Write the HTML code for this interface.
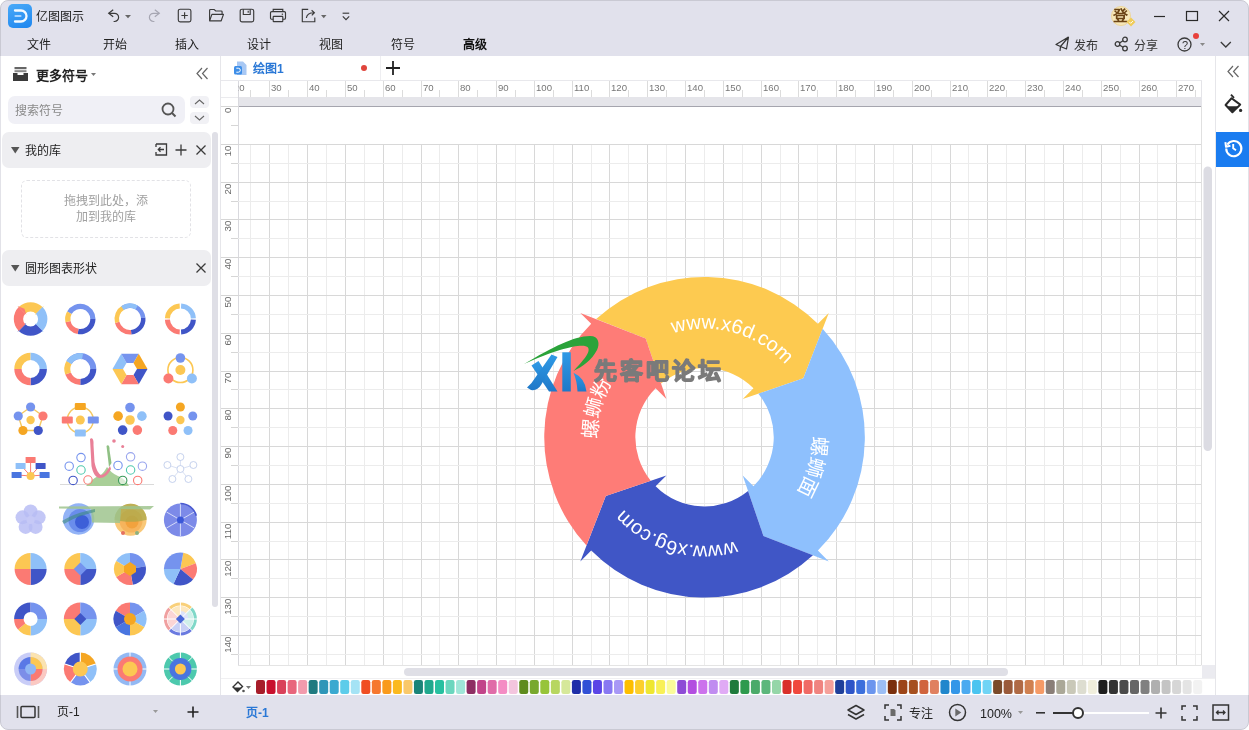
<!DOCTYPE html>
<html lang="zh-CN">
<head>
<meta charset="utf-8">
<style>
*{box-sizing:border-box;margin:0;padding:0}
html,body{width:1249px;height:730px;overflow:hidden;background:#fff;font-family:"Liberation Sans",sans-serif;color:#333}
body{will-change:transform}
.a{position:absolute}
.t{position:absolute;font-size:12px;line-height:14px;white-space:nowrap}
svg{position:absolute;display:block;overflow:visible}
</style>
</head>
<body>

<div class="a" style="left:0;top:0;width:1249px;height:730px;border:1px solid #c9c9d3;border-radius:8px;background:#e1e1ec;overflow:hidden">
</div>
<div class="a" style="left:8px;top:4px;width:24px;height:24px;border-radius:5px;background:linear-gradient(160deg,#4aaaf8,#1e86ef)"></div>
<svg style="left:8px;top:4px" width="24" height="24"><path d="M7 6.5h6a5.5 5.5 0 0 1 0 11H7" fill="none" stroke="#f4faff" stroke-width="2.3" stroke-linecap="round"/><path d="M7.5 12h5" stroke="#a8d4ff" stroke-width="2.2" stroke-linecap="round"/></svg>
<div class="t" style="left:36px;top:10px;color:#222;font-size:12px">亿图图示</div>
<svg style="left:106px;top:8px" width="14" height="16"><path d="M7.2 1.8L2.7 5.3l4.5 3.5" fill="none" stroke="#3a3a3a" stroke-width="1.2"/><path d="M2.9 5.3H8.5a4.1 4.1 0 0 1 0 8.2H7.6" fill="none" stroke="#3a3a3a" stroke-width="1.2"/></svg>
<svg style="left:125px;top:15px" width="7" height="4"><path d="M0 0h6l-3 3.2z" fill="#666"/></svg>
<svg style="left:146px;top:8px" width="15" height="16"><path d="M8.8 1.8l4.5 3.5-4.5 3.5" fill="none" stroke="#a6a6b2" stroke-width="1.2"/><path d="M13.1 5.3H7.5a4.1 4.1 0 0 0 0 8.2h0.9" fill="none" stroke="#a6a6b2" stroke-width="1.2"/></svg>
<svg style="left:177px;top:8px" width="15" height="15"><rect x="1.3" y="1.2" width="12.6" height="12.6" rx="1.8" fill="none" stroke="#3a3a3a" stroke-width="1.15"/><path d="M7.6 4.3v6.4M4.4 7.5h6.4" fill="none" stroke="#3a3a3a" stroke-width="1.15"/></svg>
<svg style="left:208px;top:8px" width="17" height="15"><path d="M1.6 12.6V2.4a0.9 0.9 0 0 1 0.9-0.9h3.7l1.5 1.5h5.5a0.9 0.9 0 0 1 0.9 0.9v2.3" fill="none" stroke="#3a3a3a" stroke-width="1.15"/><path d="M1.6 12.8L3.9 6.4h11.6l-2.3 6.4z" fill="none" stroke="#3a3a3a" stroke-width="1.15" stroke-linejoin="round"/></svg>
<svg style="left:239px;top:8px" width="16" height="15"><rect x="1.2" y="1.2" width="13.5" height="12.6" rx="1.8" fill="none" stroke="#3a3a3a" stroke-width="1.15"/><path d="M4.3 1.2v5.3h6.9V1.2M9.2 2.8v2" fill="none" stroke="#3a3a3a" stroke-width="1.15"/></svg>
<svg style="left:269px;top:8px" width="18" height="15"><path d="M4.2 3.6V1.3h9.6v2.3" fill="none" stroke="#3a3a3a" stroke-width="1.15"/><path d="M4.2 11.2H2.8a1.3 1.3 0 0 1-1.3-1.3V4.9a1.3 1.3 0 0 1 1.3-1.3h12.4a1.3 1.3 0 0 1 1.3 1.3v5a1.3 1.3 0 0 1-1.3 1.3h-1.4" fill="none" stroke="#3a3a3a" stroke-width="1.15"/><rect x="4.2" y="8.4" width="9.6" height="5.2" rx="0.6" fill="none" stroke="#3a3a3a" stroke-width="1.15"/><path d="M13.4 5.6v1.2" stroke="#3a3a3a" stroke-width="1.3"/></svg>
<svg style="left:301px;top:8px" width="16" height="15"><path d="M7.2 1.3H1.3v12.4h12.5V9.4" fill="none" stroke="#3a3a3a" stroke-width="1.15"/><path d="M5.4 10c0.3-3.2 2.6-5.3 7.6-5.3M10.6 2.3l2.8 2.4-2.6 2.6" fill="none" stroke="#3a3a3a" stroke-width="1.15"/></svg>
<svg style="left:321px;top:15px" width="7" height="4"><path d="M0 0h5.5l-2.75 3.2z" fill="#666"/></svg>
<svg style="left:342px;top:12px" width="8" height="10"><path d="M0.6 1.2h6.6" fill="none" stroke="#3a3a3a" stroke-width="1.15"/><path d="M0.8 4.3l3.2 3.3 3.2-3.3" fill="none" stroke="#3a3a3a" stroke-width="1.15"/></svg>
<div class="a" style="left:1111px;top:6px;width:20px;height:20px;border-radius:50%;background:#f7e7b8;border:1px solid #eed69a"></div>
<div class="t" style="left:1113px;top:8px;font-size:15px;line-height:16px;color:#6b4315;font-weight:bold">登</div>
<svg style="left:1126px;top:17px" width="10" height="10"><path d="M5 0.5L9.5 5 5 9.5 0.5 5z" fill="#f0cc5a"/><path d="M3.2 4.8l1.5 1.5 2.3-2.3" fill="none" stroke="#fff" stroke-width="0.9"/></svg>
<svg style="left:1154px;top:10px" width="12" height="12"><path d="M0 6.5h11" fill="none" stroke="#2a2a2a" stroke-width="1.2"/></svg>
<svg style="left:1185px;top:10px" width="13" height="12"><rect x="1.5" y="1.5" width="11" height="9" fill="none" stroke="#2a2a2a" stroke-width="1.2"/></svg>
<svg style="left:1218px;top:10px" width="12" height="12"><path d="M1 1l10 10M11 1L1 11" fill="none" stroke="#2a2a2a" stroke-width="1.2"/></svg>
<div class="t" style="left:27px;top:38px;color:#222;font-weight:normal">文件</div>
<div class="t" style="left:103px;top:38px;color:#222;font-weight:normal">开始</div>
<div class="t" style="left:175px;top:38px;color:#222;font-weight:normal">插入</div>
<div class="t" style="left:247px;top:38px;color:#222;font-weight:normal">设计</div>
<div class="t" style="left:319px;top:38px;color:#222;font-weight:normal">视图</div>
<div class="t" style="left:391px;top:38px;color:#222;font-weight:normal">符号</div>
<div class="t" style="left:463px;top:38px;color:#111;font-weight:bold">高级</div>
<svg style="left:1055px;top:36px" width="16" height="17"><path d="M13.5 1L1 8.5l4.5 2L5 15M13.5 1l-2 12-6-2.5M13.5 1l-8 9.5" fill="none" stroke="#333" stroke-width="1.2" stroke-linejoin="round"/></svg>
<div class="t" style="left:1074px;top:39px;color:#333">发布</div>
<svg style="left:1114px;top:36px" width="15" height="16"><circle cx="3.5" cy="8" r="2.3" fill="none" stroke="#3a3a3a" stroke-width="1.3"/><circle cx="11" cy="3.5" r="2.3" fill="none" stroke="#3a3a3a" stroke-width="1.3"/><circle cx="11" cy="12.5" r="2.3" fill="none" stroke="#3a3a3a" stroke-width="1.3"/><path d="M5.5 7l3.5-2.3M5.5 9l3.5 2.3" fill="none" stroke="#3a3a3a" stroke-width="1.3"/></svg>
<div class="t" style="left:1134px;top:39px;color:#333">分享</div>
<svg style="left:1177px;top:37px" width="16" height="16"><circle cx="7.5" cy="7.5" r="6.5" fill="none" stroke="#3a3a3a" stroke-width="1.3"/></svg>
<div class="t" style="left:1182px;top:38px;font-size:11px;color:#333">?</div>
<div class="a" style="left:1193px;top:33px;width:6px;height:6px;border-radius:50%;background:#e8413c"></div>
<svg style="left:1200px;top:43px" width="6" height="4"><path d="M0 0h5l-2.5 3z" fill="#888"/></svg>
<svg style="left:1220px;top:41px" width="12" height="7"><path d="M0.8 1l5 5 5-5" fill="none" stroke="#3a3a3a" stroke-width="1.3"/></svg>
<div class="a" style="left:1px;top:56px;width:219px;height:639px;background:#fff"></div>
<div class="a" style="left:220px;top:56px;width:1px;height:639px;background:#e6e6ea"></div>
<div class="a" style="left:221px;top:56px;width:994px;height:639px;background:#fff"></div>
<div class="a" style="left:1215px;top:56px;width:1px;height:639px;background:#e6e6ea"></div>
<div class="a" style="left:1216px;top:56px;width:32px;height:639px;background:#fff"></div>
<div class="a" style="left:0;top:56px;width:1px;height:639px;background:#e2e2e8"></div>
<div class="a" style="left:1248px;top:56px;width:1px;height:639px;background:#e2e2e8"></div>
<svg style="left:13px;top:67px" width="15" height="14"><rect x="1.5" y="0" width="12" height="2.2" fill="#666"/><rect x="1.5" y="3.2" width="12" height="2" fill="#888"/><path d="M0 6h4.5v2h6V6H15v8H0z" fill="#3a3a3a"/></svg>
<div class="t" style="left:36px;top:68px;font-size:13px;line-height:15px;font-weight:bold;color:#222">更多符号</div>
<svg style="left:91px;top:73px" width="6" height="4"><path d="M0 0h5l-2.5 3z" fill="#777"/></svg>
<svg style="left:195px;top:67px" width="14" height="13"><path d="M7 1L2 6.5 7 12M12.5 1l-5 5.5 5 5.5" fill="none" stroke="#666" stroke-width="1.2"/></svg>
<div class="a" style="left:8px;top:96px;width:177px;height:28px;border-radius:7px;background:#f0f0f6"></div>
<div class="t" style="left:15px;top:104px;color:#8a8a8a;font-size:12px">搜索符号</div>
<svg style="left:161px;top:102px" width="17" height="17"><circle cx="7" cy="7" r="5.5" fill="none" stroke="#555" stroke-width="1.8"/><path d="M11 11l3.5 3.5" stroke="#555" stroke-width="2"/></svg>
<div class="a" style="left:190px;top:96px;width:19px;height:12px;border-radius:4px;background:#f1f1f5"></div>
<div class="a" style="left:190px;top:112px;width:19px;height:12px;border-radius:4px;background:#f1f1f5"></div>
<svg style="left:193px;top:98px" width="13" height="8"><path d="M2 6l4.5-4 4.5 4" fill="none" stroke="#666" stroke-width="1.1"/></svg>
<svg style="left:193px;top:114px" width="13" height="8"><path d="M2 2l4.5 4 4.5-4" fill="none" stroke="#666" stroke-width="1.1"/></svg>
<div class="a" style="left:2px;top:132px;width:209px;height:36px;border-radius:7px;background:#eeeef1"></div>
<svg style="left:11px;top:147px" width="9" height="7"><path d="M0 0h8.5L4.25 6.5z" fill="#555"/></svg>
<div class="t" style="left:25px;top:144px;color:#222">我的库</div>
<svg style="left:155px;top:143px" width="13" height="13"><path d="M1 1h10.5v11H1v-3M1 4V1" fill="none" stroke="#3a3a3a" stroke-width="1.3"/><path d="M9 6.5H3.5M5.5 4.3L3.3 6.5l2.2 2.2" fill="none" stroke="#3a3a3a" stroke-width="1.3"/></svg>
<svg style="left:175px;top:144px" width="12" height="12"><path d="M6 0.5v11M0.5 6h11" fill="none" stroke="#3a3a3a" stroke-width="1.3"/></svg>
<svg style="left:196px;top:145px" width="10" height="10"><path d="M0.5 0.5l9 9M9.5 0.5l-9 9" fill="none" stroke="#3a3a3a" stroke-width="1.3"/></svg>
<div class="a" style="left:21px;top:180px;width:170px;height:58px;border:1px dashed #e2e2e6;border-radius:6px"></div>
<div class="t" style="left:21px;top:193px;width:170px;text-align:center;color:#a0a0a0;line-height:16px">拖拽到此处，添<br>加到我的库</div>
<div class="a" style="left:2px;top:250px;width:209px;height:36px;border-radius:7px;background:#eeeef1"></div>
<svg style="left:11px;top:265px" width="9" height="7"><path d="M0 0h8.5L4.25 6.5z" fill="#555"/></svg>
<div class="t" style="left:25px;top:262px;color:#222">圆形图表形状</div>
<svg style="left:196px;top:263px" width="10" height="10"><path d="M0.5 0.5l9 9M9.5 0.5l-9 9" fill="none" stroke="#3a3a3a" stroke-width="1.3"/></svg>
<div class="a" style="left:212px;top:132px;width:6px;height:475px;border-radius:3px;background:#dfdfe6"></div>
<svg style="left:0;top:0" width="1249" height="730"><defs><filter id="tb" x="-5%" y="-5%" width="110%" height="110%"><feGaussianBlur stdDeviation="0.35"/></filter></defs><g filter="url(#tb)">
<path d="M18.72 307.12A16.8 16.8 0 0 1 42.48 307.12L35.90 313.70A7.5 7.5 0 0 0 25.30 313.70Z" fill="#fcc752" />
<path d="M43.68 305.92L40.89 312.82L34.84 314.76Z" fill="#fcc752"/>
<path d="M42.48 307.12A16.8 16.8 0 0 1 42.48 330.88L35.90 324.30A7.5 7.5 0 0 0 35.90 313.70Z" fill="#8fc0f8" />
<path d="M43.68 332.08L36.78 329.29L34.84 323.24Z" fill="#8fc0f8"/>
<path d="M42.48 330.88A16.8 16.8 0 0 1 18.72 330.88L25.30 324.30A7.5 7.5 0 0 0 35.90 324.30Z" fill="#3f55c7" />
<path d="M17.52 332.08L20.31 325.18L26.36 323.24Z" fill="#3f55c7"/>
<path d="M18.72 330.88A16.8 16.8 0 0 1 18.72 307.12L25.30 313.70A7.5 7.5 0 0 0 25.30 324.30Z" fill="#fb7a73" />
<path d="M17.52 305.92L24.42 308.71L26.36 314.76Z" fill="#fb7a73"/>
<path d="M67.14 311.40A15.2 15.2 0 0 1 95.50 319.00L90.30 319.00A10 10 0 0 0 71.64 314.00Z" fill="#7593ee" />
<path d="M95.50 319.00A15.2 15.2 0 0 1 77.66 333.97L78.56 328.85A10 10 0 0 0 90.30 319.00Z" fill="#3f55c7" />
<path d="M77.66 333.97A15.2 15.2 0 0 1 65.43 322.16L70.52 321.08A10 10 0 0 0 78.56 328.85Z" fill="#fb7a73" />
<path d="M65.43 322.16A15.2 15.2 0 0 1 67.14 311.40L71.64 314.00A10 10 0 0 0 70.52 321.08Z" fill="#fcc752" />
<path d="M122.25 305.58A15.5 15.5 0 0 1 145.44 317.65L140.96 318.04A11 11 0 0 0 124.50 309.47Z" fill="#7593ee" />
<path d="M145.44 317.65A15.5 15.5 0 0 1 131.35 334.44L130.96 329.96A11 11 0 0 0 140.96 318.04Z" fill="#3f55c7" />
<path d="M131.35 334.44A15.5 15.5 0 0 1 115.03 323.01L119.37 321.85A11 11 0 0 0 130.96 329.96Z" fill="#fb7a73" />
<path d="M115.03 323.01A15.5 15.5 0 0 1 122.25 305.58L124.50 309.47A11 11 0 0 0 119.37 321.85Z" fill="#fcc752" />
<path d="M121.11 306.30A15.5 15.5 0 0 1 137.75 305.58L135.50 309.47A11 11 0 0 0 123.69 309.99Z" fill="#8fc0f8" />
<path d="M164.92 318.19A15.5 15.5 0 0 1 179.59 303.52L179.85 308.51A10.5 10.5 0 0 0 169.91 318.45Z" fill="#fcc752" />
<path d="M181.21 303.52A15.5 15.5 0 0 1 195.88 318.19L190.89 318.45A10.5 10.5 0 0 0 180.95 308.51Z" fill="#8fc0f8" />
<path d="M195.88 319.81A15.5 15.5 0 0 1 181.21 334.48L180.95 329.49A10.5 10.5 0 0 0 190.89 319.55Z" fill="#3f55c7" />
<path d="M179.59 334.48A15.5 15.5 0 0 1 164.92 319.81L169.91 319.55A10.5 10.5 0 0 0 179.85 329.49Z" fill="#fb7a73" />
<path d="M14.30 369.00A16.3 16.3 0 0 1 30.60 352.70L30.60 360.00A9 9 0 0 0 21.60 369.00Z" fill="#fcc752" />
<path d="M30.60 352.70A16.3 16.3 0 0 1 46.90 369.00L39.60 369.00A9 9 0 0 0 30.60 360.00Z" fill="#8fc0f8" />
<path d="M46.90 369.00A16.3 16.3 0 0 1 30.60 385.30L30.60 378.00A9 9 0 0 0 39.60 369.00Z" fill="#3f55c7" />
<path d="M30.60 385.30A16.3 16.3 0 0 1 14.30 369.00L21.60 369.00A9 9 0 0 0 30.60 378.00Z" fill="#fb7a73" />
<path d="M66.44 361.00A16 16 0 0 1 96.30 369.00L90.30 369.00A10 10 0 0 0 71.64 364.00Z" fill="#7593ee" />
<path d="M96.30 369.00A16 16 0 0 1 80.30 385.00L80.30 379.00A10 10 0 0 0 90.30 369.00Z" fill="#3f55c7" />
<path d="M80.30 385.00A16 16 0 0 1 65.26 374.47L70.90 372.42A10 10 0 0 0 80.30 379.00Z" fill="#fb7a73" />
<path d="M65.26 374.47A16 16 0 0 1 66.44 361.00L71.64 364.00A10 10 0 0 0 70.90 372.42Z" fill="#fcc752" />
<path d="M66.44 361.00A16 16 0 0 1 83.08 353.24L82.04 359.15A10 10 0 0 0 71.64 364.00Z" fill="#8fc0f8" />
<path d="M112.50 369.00L121.25 353.84L126.50 362.94L123.00 369.00Z" fill="#8fc0f8"/>
<path d="M121.25 353.84L138.75 353.84L133.50 362.94L126.50 362.94Z" fill="#7593ee"/>
<path d="M138.75 353.84L147.50 369.00L137.00 369.00L133.50 362.94Z" fill="#f5a623"/>
<path d="M147.50 369.00L138.75 384.16L133.50 375.06L137.00 369.00Z" fill="#3f55c7"/>
<path d="M138.75 384.16L121.25 384.16L126.50 375.06L133.50 375.06Z" fill="#fb7a73"/>
<path d="M121.25 384.16L112.50 369.00L123.00 369.00L126.50 375.06Z" fill="#fcc752"/>
<circle cx="180.4" cy="370" r="12.5" fill="none" stroke="#fcc752" stroke-width="1.6"/>
<circle cx="180.4" cy="370" r="5" fill="#fcc752" />
<circle cx="180.4" cy="358" r="4.8" fill="#7593ee" />
<circle cx="168.4" cy="378.5" r="5" fill="#fb7a73" />
<circle cx="191.9" cy="378.5" r="5" fill="#8fc0f8" />
<path d="M30.60 407.00L42.96 415.98L38.24 430.52L22.96 430.52L18.24 415.98Z" fill="none" stroke="#f5c860" stroke-width="1.4"/>
<circle cx="30.6" cy="407.0" r="4.6" fill="#7593ee" />
<circle cx="42.96" cy="415.98" r="4.6" fill="#fb7a73" />
<circle cx="38.24" cy="430.52" r="4.6" fill="#3f55c7" />
<circle cx="22.96" cy="430.52" r="4.6" fill="#f5a623" />
<circle cx="18.24" cy="415.98" r="4.6" fill="#7593ee" />
<circle cx="30.6" cy="420" r="4.2" fill="#fcc752" />
<circle cx="80.3" cy="420" r="13" fill="none" stroke="#f5c860" stroke-width="1.4"/>
<circle cx="80.3" cy="420" r="4.5" fill="#fcc752" />
<rect x="74.80" y="402.90" width="11" height="7.2" rx="1" fill="#f5a623"/>
<rect x="61.80" y="416.40" width="11" height="7.2" rx="1" fill="#fb7a73"/>
<rect x="87.80" y="416.40" width="11" height="7.2" rx="1" fill="#7593ee"/>
<rect x="74.80" y="429.40" width="11" height="7.2" rx="1" fill="#8fc0f8"/>
<circle cx="130.0" cy="407.5" r="4.8" fill="#7593ee" />
<circle cx="141.89" cy="416.14" r="4.8" fill="#8fc0f8" />
<circle cx="137.35" cy="430.11" r="4.8" fill="#fb7a73" />
<circle cx="122.65" cy="430.11" r="4.8" fill="#3f55c7" />
<circle cx="118.11" cy="416.14" r="4.8" fill="#f5a623" />
<circle cx="130" cy="420" r="4.8" fill="#fcc752" />
<circle cx="180.4" cy="407.0" r="4.5" fill="#f5a623" />
<circle cx="192.76" cy="415.98" r="4.5" fill="#7593ee" />
<circle cx="188.04" cy="430.52" r="4.5" fill="#8fc0f8" />
<circle cx="172.76" cy="430.52" r="4.5" fill="#fb7a73" />
<circle cx="168.04" cy="415.98" r="4.5" fill="#3f55c7" />
<circle cx="180.4" cy="420" r="4.2" fill="#fcc752" />
<path d="M30.6 476L30.6 460M30.6 476L21.6 466M30.6 476L39.6 466M30.6 476L17.6 475M30.6 476L43.6 475" stroke="#fb7a73" stroke-width="1"/>
<rect x="25.60" y="457.00" width="10" height="6" rx="0.6" fill="#fb7a73"/>
<rect x="15.60" y="463.00" width="10" height="6" rx="0.6" fill="#8fc0f8"/>
<rect x="35.60" y="463.00" width="10" height="6" rx="0.6" fill="#3f55c7"/>
<rect x="11.60" y="472.00" width="10" height="6" rx="0.6" fill="#4a74e0"/>
<rect x="39.60" y="472.00" width="10" height="6" rx="0.6" fill="#4a74e0"/>
<circle cx="30.6" cy="476" r="4" fill="#fcc752" />
<path d="M60 484.5L154 484.5" stroke="#d0d0d0" stroke-width="0.8"/>
<path d="M86 486C91 481 95 477 99 476C103 474 105 470 107 467C110 471 113 474 118 476C123 478 127 482 129 486Z" fill="#a9cf98"/>
<path d="M90 439C92 437 94 439 93.5 445L94.5 462C96 470 99 474 101 475C104 475 107 471 110 466L111 469C108 475 104 478 100 478C96 478 93 474 91.5 466Z" fill="#e98097"/>
<path d="M106.5 446C108 444 110 446 109.5 450L111.5 463L109 467Z" fill="#8fc084"/>
<circle cx="114" cy="441" r="1.8" fill="#e98097" />
<circle cx="122.7" cy="446.5" r="1.5" fill="#e98097" />
<circle cx="81" cy="457.6" r="4.2" fill="#fff" fill-opacity="0.6" stroke="#7593ee" stroke-width="1.1"/>
<circle cx="69.2" cy="466.2" r="4.2" fill="#fff" fill-opacity="0.6" stroke="#7593ee" stroke-width="1.1"/>
<circle cx="81" cy="470" r="4.2" fill="#fff" fill-opacity="0.6" stroke="#4ec9ad" stroke-width="1.1"/>
<circle cx="73.1" cy="480.4" r="4.2" fill="#fff" fill-opacity="0.6" stroke="#3f55c7" stroke-width="1.1"/>
<circle cx="88" cy="480" r="4.2" fill="#fff" fill-opacity="0.6" stroke="#fb7a73" stroke-width="1.1"/>
<circle cx="118" cy="465.4" r="4.2" fill="#fff" fill-opacity="0.6" stroke="#7593ee" stroke-width="1.1"/>
<circle cx="130.6" cy="456.8" r="4.2" fill="#fff" fill-opacity="0.6" stroke="#9aa6ee" stroke-width="1.1"/>
<circle cx="142.4" cy="466.2" r="4.2" fill="#fff" fill-opacity="0.6" stroke="#9aa6ee" stroke-width="1.1"/>
<circle cx="130.6" cy="470" r="4.2" fill="#fff" fill-opacity="0.6" stroke="#4ec9ad" stroke-width="1.1"/>
<circle cx="122.7" cy="480.4" r="4.2" fill="#fff" fill-opacity="0.6" stroke="#3a9a5a" stroke-width="1.1"/>
<circle cx="137.7" cy="480.4" r="4.2" fill="#fff" fill-opacity="0.6" stroke="#fb7a73" stroke-width="1.1"/>
<path d="M180.4 469L180.4 457" stroke="#c8d4ee" stroke-width="0.7"/>
<circle cx="180.4" cy="457" r="3.5" fill="#fff" stroke="#b8c6e8" stroke-width="0.8"/>
<path d="M180.4 469L167.4 465" stroke="#c8d4ee" stroke-width="0.7"/>
<circle cx="167.4" cy="465" r="3.5" fill="#fff" stroke="#b8c6e8" stroke-width="0.8"/>
<path d="M180.4 469L193.4 465" stroke="#c8d4ee" stroke-width="0.7"/>
<circle cx="193.4" cy="465" r="3.5" fill="#fff" stroke="#b8c6e8" stroke-width="0.8"/>
<path d="M180.4 469L172.4 479" stroke="#c8d4ee" stroke-width="0.7"/>
<circle cx="172.4" cy="479" r="3.5" fill="#fff" stroke="#b8c6e8" stroke-width="0.8"/>
<path d="M180.4 469L188.4 479" stroke="#c8d4ee" stroke-width="0.7"/>
<circle cx="188.4" cy="479" r="3.5" fill="#fff" stroke="#b8c6e8" stroke-width="0.8"/>
<circle cx="180.4" cy="469" r="3.5" fill="#fff" stroke="#b8c6e8" stroke-width="0.8"/>
<circle cx="30.6" cy="511.5" r="7" fill="#b9bdf4" fill-opacity="0.85"/>
<circle cx="38.68" cy="517.37" r="7" fill="#b9bdf4" fill-opacity="0.85"/>
<circle cx="35.6" cy="526.88" r="7" fill="#b9bdf4" fill-opacity="0.85"/>
<circle cx="25.6" cy="526.88" r="7" fill="#b9bdf4" fill-opacity="0.85"/>
<circle cx="22.52" cy="517.37" r="7" fill="#b9bdf4" fill-opacity="0.85"/>
<circle cx="30.6" cy="520" r="4" fill="#c6c9f6" />
<defs><radialGradient id="sph" cx="0.6" cy="0.6" r="0.6"><stop offset="0" stop-color="#3560d8"/><stop offset="1" stop-color="#8ab4f2"/></radialGradient><radialGradient id="sph2" cx="0.5" cy="0.6" r="0.6"><stop offset="0" stop-color="#f6a24a"/><stop offset="1" stop-color="#f8d27a"/></radialGradient></defs>
<circle cx="78.6" cy="519" r="15.7" fill="#93b3f6" />
<circle cx="80" cy="520.5" r="11.5" fill="#6b8dec" />
<circle cx="82" cy="522" r="7" fill="#3d5fd8" />
<circle cx="130.6" cy="519.8" r="16" fill="#f9c878" />
<circle cx="131" cy="521" r="11.5" fill="#f6b45c" />
<circle cx="132" cy="522" r="6.5" fill="#f2a23e" />
<path d="M114.6 519.8A16 16 0 0 1 146.6 519.8C140 522 125 523 114.6 519.8Z" fill="#a9a84a" fill-opacity="0.75"/>
<path d="M59 506.5L154 506L150 509.5L121 509L120 523L92 522.5L91 509L59 508.5Z" fill="#9fc48e" fill-opacity="0.85"/>
<path d="M62 521C70 516 80 512 95 509L95 512C82 515 72 519 64 524Z" fill="#3d8a80" fill-opacity="0.6"/>
<circle cx="123" cy="533" r="2" fill="#e57060" />
<circle cx="137" cy="533" r="2" fill="#8db080" />
<circle cx="180.4" cy="520" r="16.5" fill="#7b8ae8" />
<path d="M180.4 520L180.40 504.00" stroke="#dfe3fb" stroke-width="0.9"/>
<path d="M180.4 520L194.26 512.00" stroke="#dfe3fb" stroke-width="0.9"/>
<path d="M180.4 520L194.26 528.00" stroke="#dfe3fb" stroke-width="0.9"/>
<path d="M180.4 520L180.40 536.00" stroke="#dfe3fb" stroke-width="0.9"/>
<path d="M180.4 520L166.54 528.00" stroke="#dfe3fb" stroke-width="0.9"/>
<path d="M180.4 520L166.54 512.00" stroke="#dfe3fb" stroke-width="0.9"/>
<path d="M180.4 503.5A16.5 16.5 0 0 1 196.30 515.70" fill="none" stroke="#4a5ad0" stroke-width="1.6"/>
<circle cx="180.4" cy="520" r="3.5" fill="#3a58d8" />
<path d="M30.60 569.00L14.60 569.00A16 16 0 0 1 30.60 553.00Z" fill="#fcc752" />
<path d="M30.60 569.00L30.60 553.00A16 16 0 0 1 46.60 569.00Z" fill="#8fc0f8" />
<path d="M30.60 569.00L46.60 569.00A16 16 0 0 1 30.60 585.00Z" fill="#3f55c7" />
<path d="M30.60 569.00L30.60 585.00A16 16 0 0 1 14.60 569.00Z" fill="#fb7a73" />
<path d="M80.30 569.00L64.30 569.00A16 16 0 0 1 80.30 553.00Z" fill="#fcc752" />
<path d="M80.30 569.00L80.30 553.00A16 16 0 0 1 96.30 569.00Z" fill="#8fc0f8" />
<path d="M80.30 569.00L96.30 569.00A16 16 0 0 1 80.30 585.00Z" fill="#3f55c7" />
<path d="M80.30 569.00L80.30 585.00A16 16 0 0 1 64.30 569.00Z" fill="#fb7a73" />
<path d="M80.3 562.5L86.8 569L80.3 575.5L73.8 569Z" fill="#7593ee"/>
<path d="M130.00 569.00L116.14 561.00A16 16 0 0 1 130.00 553.00Z" fill="#8fc0f8" />
<path d="M130.00 569.00L130.00 553.00A16 16 0 0 1 145.76 566.22Z" fill="#7593ee" />
<path d="M130.00 569.00L145.76 566.22A16 16 0 0 1 132.78 584.76Z" fill="#3f55c7" />
<path d="M130.00 569.00L132.78 584.76A16 16 0 0 1 116.14 577.00Z" fill="#fb7a73" />
<path d="M130.00 569.00L116.14 577.00A16 16 0 0 1 116.14 561.00Z" fill="#fcc752" />
<path d="M124 566L130 562L136 566L136 572L130 576L124 572Z" fill="#f5a623"/>
<path d="M180.40 569.00L183.27 552.75A16.5 16.5 0 0 1 195.90 563.36Z" fill="#fcc752" />
<path d="M180.40 569.00L195.90 563.36A16.5 16.5 0 0 1 193.04 579.61Z" fill="#fb7a73" />
<path d="M180.40 569.00L193.04 579.61A16.5 16.5 0 0 1 173.43 583.95Z" fill="#3f55c7" />
<path d="M180.40 569.00L173.43 583.95A16.5 16.5 0 0 1 163.90 569.00Z" fill="#8fc0f8" />
<path d="M180.40 569.00L163.90 569.00A16.5 16.5 0 0 1 183.27 552.75Z" fill="#7593ee" />
<path d="M14.10 619.00A16.5 16.5 0 0 1 30.60 602.50L30.60 612.00A7 7 0 0 0 23.60 619.00Z" fill="#3f55c7" />
<path d="M30.60 602.50A16.5 16.5 0 0 1 47.10 619.00L37.60 619.00A7 7 0 0 0 30.60 612.00Z" fill="#7593ee" />
<path d="M47.10 619.00A16.5 16.5 0 0 1 30.60 635.50L30.60 626.00A7 7 0 0 0 37.60 619.00Z" fill="#8fc0f8" />
<path d="M30.60 635.50A16.5 16.5 0 0 1 17.96 629.61L25.24 623.50A7 7 0 0 0 30.60 626.00Z" fill="#fcc752" />
<path d="M17.96 629.61A16.5 16.5 0 0 1 14.10 619.00L23.60 619.00A7 7 0 0 0 25.24 623.50Z" fill="#fb7a73" />
<path d="M80.30 619.00L63.80 619.00A16.5 16.5 0 0 1 80.30 602.50Z" fill="#fb7a73" />
<path d="M80.30 619.00L80.30 602.50A16.5 16.5 0 0 1 96.80 619.00Z" fill="#7593ee" />
<path d="M80.30 619.00L96.80 619.00A16.5 16.5 0 0 1 80.30 635.50Z" fill="#8fc0f8" />
<path d="M80.30 619.00L80.30 635.50A16.5 16.5 0 0 1 63.80 619.00Z" fill="#fcc752" />
<path d="M80.3 613L86.3 619L80.3 625L74.3 619Z" fill="#3f55c7"/>
<path d="M130.00 619.00L115.71 610.75A16.5 16.5 0 0 1 130.00 602.50Z" fill="#fb7a73" />
<path d="M130.00 619.00L130.00 602.50A16.5 16.5 0 0 1 144.29 610.75Z" fill="#7593ee" />
<path d="M130.00 619.00L144.29 610.75A16.5 16.5 0 0 1 144.29 627.25Z" fill="#8fc0f8" />
<path d="M130.00 619.00L144.29 627.25A16.5 16.5 0 0 1 130.00 635.50Z" fill="#fcc752" />
<path d="M130.00 619.00L130.00 635.50A16.5 16.5 0 0 1 115.71 627.25Z" fill="#4a74e0" />
<path d="M130.00 619.00L115.71 627.25A16.5 16.5 0 0 1 115.71 610.75Z" fill="#3f55c7" />
<circle cx="130" cy="619" r="6" fill="#f5a623" />
<path d="M168.73 607.33A16.5 16.5 0 0 1 192.07 607.33L189.95 609.45A13.5 13.5 0 0 0 170.85 609.45Z" fill="#f9d07a" />
<path d="M192.07 607.33A16.5 16.5 0 0 1 192.07 630.67L189.95 628.55A13.5 13.5 0 0 0 189.95 609.45Z" fill="#7fd8c8" />
<path d="M192.07 630.67A16.5 16.5 0 0 1 168.73 630.67L170.85 628.55A13.5 13.5 0 0 0 189.95 628.55Z" fill="#6a7ae0" />
<path d="M168.73 630.67A16.5 16.5 0 0 1 168.73 607.33L170.85 609.45A13.5 13.5 0 0 0 170.85 628.55Z" fill="#f0a0a0" />
<path d="M180.40 619.00L171.21 609.81A13 13 0 0 1 189.59 609.81Z" fill="#fde8c0" />
<path d="M180.40 619.00L189.59 609.81A13 13 0 0 1 189.59 628.19Z" fill="#d0f0ea" />
<path d="M180.40 619.00L189.59 628.19A13 13 0 0 1 171.21 628.19Z" fill="#c8d0f5" />
<path d="M180.40 619.00L171.21 628.19A13 13 0 0 1 171.21 609.81Z" fill="#fbd5d5" />
<path d="M180.40 619.00L180.40 611.00A8 8 0 0 1 188.40 619.00Z" fill="#dde4fa" />
<path d="M180.4 619L197.40 619.00" stroke="#fff" stroke-width="1"/>
<path d="M180.4 619L192.42 631.02" stroke="#fff" stroke-width="1"/>
<path d="M180.4 619L180.40 636.00" stroke="#fff" stroke-width="1"/>
<path d="M180.4 619L168.38 631.02" stroke="#fff" stroke-width="1"/>
<path d="M180.4 619L163.40 619.00" stroke="#fff" stroke-width="1"/>
<path d="M180.4 619L168.38 606.98" stroke="#fff" stroke-width="1"/>
<path d="M180.4 619L180.40 602.00" stroke="#fff" stroke-width="1"/>
<path d="M180.4 619L192.42 606.98" stroke="#fff" stroke-width="1"/>
<path d="M180.4 614.5L184.9 619L180.4 623.5L175.9 619Z" fill="#4a68d8"/>
<circle cx="30.6" cy="669" r="16.5" fill="#c9cdf7" />
<path d="M30.60 652.50A16.5 16.5 0 0 1 47.10 669.00L42.60 669.00A12 12 0 0 0 30.60 657.00Z" fill="#fbe3b0" />
<path d="M47.10 669.00A16.5 16.5 0 0 1 30.60 685.50L30.60 681.00A12 12 0 0 0 42.60 669.00Z" fill="#fbc9c2" />
<path d="M30.60 669.00L18.60 669.00A12 12 0 0 1 30.60 657.00Z" fill="#5a78e6" />
<path d="M30.60 669.00L30.60 657.00A12 12 0 0 1 42.60 669.00Z" fill="#fcc752" />
<path d="M30.60 669.00L42.60 669.00A12 12 0 0 1 30.60 681.00Z" fill="#fb7a73" />
<path d="M30.60 669.00L30.60 681.00A12 12 0 0 1 18.60 669.00Z" fill="#7c8ee8" />
<circle cx="30.6" cy="669" r="5.5" fill="#8fb6f5" />
<path d="M80.30 669.00L64.61 663.90A16.5 16.5 0 0 1 80.30 652.50Z" fill="#3f55c7" />
<path d="M80.30 669.00L80.30 652.50A16.5 16.5 0 0 1 95.99 663.90Z" fill="#f5a623" />
<path d="M80.30 669.00L95.99 663.90A16.5 16.5 0 0 1 90.00 682.35Z" fill="#8fc0f8" />
<path d="M80.30 669.00L90.00 682.35A16.5 16.5 0 0 1 70.60 682.35Z" fill="#7593ee" />
<path d="M80.30 669.00L70.60 682.35A16.5 16.5 0 0 1 64.61 663.90Z" fill="#fb7a73" />
<path d="M80.3 669L80.30 652.00" stroke="#fff" stroke-width="1.2"/>
<path d="M80.3 669L96.47 663.75" stroke="#fff" stroke-width="1.2"/>
<path d="M80.3 669L90.29 682.75" stroke="#fff" stroke-width="1.2"/>
<path d="M80.3 669L70.31 682.75" stroke="#fff" stroke-width="1.2"/>
<path d="M80.3 669L64.13 663.75" stroke="#fff" stroke-width="1.2"/>
<circle cx="80.3" cy="669" r="7.5" fill="#fcc752" />
<circle cx="130" cy="669" r="16.5" fill="#93b9f4" />
<circle cx="130" cy="669" r="12.5" fill="#fb7a73" />
<circle cx="130" cy="669" r="7.5" fill="#fcc752" />
<path d="M142.50 669.00L147.00 669.00" stroke="#fff" stroke-width="1"/>
<path d="M130.00 681.50L130.00 686.00" stroke="#fff" stroke-width="1"/>
<path d="M117.50 669.00L113.00 669.00" stroke="#fff" stroke-width="1"/>
<path d="M130.00 656.50L130.00 652.00" stroke="#fff" stroke-width="1"/>
<circle cx="180.4" cy="669" r="16.5" fill="#4ec9ad" />
<circle cx="180.4" cy="669" r="11" fill="#4a74e0" />
<circle cx="180.4" cy="669" r="5.5" fill="#fcc752" />
<path d="M191.40 669.00L197.40 669.00" stroke="#fff" stroke-width="1"/>
<path d="M188.18 676.78L192.42 681.02" stroke="#fff" stroke-width="1"/>
<path d="M180.40 680.00L180.40 686.00" stroke="#fff" stroke-width="1"/>
<path d="M172.62 676.78L168.38 681.02" stroke="#fff" stroke-width="1"/>
<path d="M169.40 669.00L163.40 669.00" stroke="#fff" stroke-width="1"/>
<path d="M172.62 661.22L168.38 656.98" stroke="#fff" stroke-width="1"/>
<path d="M180.40 658.00L180.40 652.00" stroke="#fff" stroke-width="1"/>
<path d="M188.18 661.22L192.42 656.98" stroke="#fff" stroke-width="1"/>
</g></svg>
<svg style="left:233px;top:61px" width="15" height="15"><path d="M4 0.5h6l3.5 3.5v10H4z" fill="#a8c8f4"/><rect x="1" y="5" width="8" height="8.5" rx="1.5" fill="#3d8ee8"/><path d="M3.3 7.2h2a2 2 0 0 1 0 4h-2" fill="none" stroke="#fff" stroke-width="1"/></svg>
<div class="t" style="left:253px;top:62px;color:#2a78d6;font-weight:bold">绘图1</div>
<div class="a" style="left:361px;top:65px;width:6px;height:6px;border-radius:50%;background:#e0453c"></div>
<div class="a" style="left:380px;top:56px;width:1px;height:24px;background:#eeeef1"></div>
<svg style="left:385px;top:60px" width="16" height="16"><path d="M8 1v14M1 8h14" stroke="#222" stroke-width="1.8"/></svg>
<div class="a" style="left:221px;top:80px;width:981px;height:1px;background:#e8e8ec"></div>
<svg style="left:0;top:0" width="1249" height="730">
<rect x="221" y="81" width="981" height="16" fill="#fff"/>
<rect x="238" y="97" width="964" height="9" fill="#e5e5ea"/>
<rect x="238" y="106" width="964" height="1" fill="#a5a5ae"/>
<line x1="221" y1="97.5" x2="238" y2="97.5" stroke="#ebebee" stroke-width="1"/>
<line x1="238.5" y1="81" x2="238.5" y2="665" stroke="#d9d9de" stroke-width="1"/>
<line x1="250.5" y1="144" x2="250.5" y2="665" stroke="#ececec" stroke-width="1"/>
<line x1="269.5" y1="144" x2="269.5" y2="665" stroke="#d8d8d8" stroke-width="1"/>
<line x1="288.5" y1="144" x2="288.5" y2="665" stroke="#ececec" stroke-width="1"/>
<line x1="307.5" y1="144" x2="307.5" y2="665" stroke="#d8d8d8" stroke-width="1"/>
<line x1="326.5" y1="144" x2="326.5" y2="665" stroke="#ececec" stroke-width="1"/>
<line x1="345.5" y1="144" x2="345.5" y2="665" stroke="#d8d8d8" stroke-width="1"/>
<line x1="364.5" y1="144" x2="364.5" y2="665" stroke="#ececec" stroke-width="1"/>
<line x1="383.5" y1="144" x2="383.5" y2="665" stroke="#d8d8d8" stroke-width="1"/>
<line x1="402.5" y1="144" x2="402.5" y2="665" stroke="#ececec" stroke-width="1"/>
<line x1="421.5" y1="144" x2="421.5" y2="665" stroke="#d8d8d8" stroke-width="1"/>
<line x1="439.5" y1="144" x2="439.5" y2="665" stroke="#ececec" stroke-width="1"/>
<line x1="458.5" y1="144" x2="458.5" y2="665" stroke="#d8d8d8" stroke-width="1"/>
<line x1="477.5" y1="144" x2="477.5" y2="665" stroke="#ececec" stroke-width="1"/>
<line x1="496.5" y1="144" x2="496.5" y2="665" stroke="#d8d8d8" stroke-width="1"/>
<line x1="515.5" y1="144" x2="515.5" y2="665" stroke="#ececec" stroke-width="1"/>
<line x1="534.5" y1="144" x2="534.5" y2="665" stroke="#d8d8d8" stroke-width="1"/>
<line x1="553.5" y1="144" x2="553.5" y2="665" stroke="#ececec" stroke-width="1"/>
<line x1="572.5" y1="144" x2="572.5" y2="665" stroke="#d8d8d8" stroke-width="1"/>
<line x1="591.5" y1="144" x2="591.5" y2="665" stroke="#ececec" stroke-width="1"/>
<line x1="609.5" y1="144" x2="609.5" y2="665" stroke="#d8d8d8" stroke-width="1"/>
<line x1="628.5" y1="144" x2="628.5" y2="665" stroke="#ececec" stroke-width="1"/>
<line x1="647.5" y1="144" x2="647.5" y2="665" stroke="#d8d8d8" stroke-width="1"/>
<line x1="666.5" y1="144" x2="666.5" y2="665" stroke="#ececec" stroke-width="1"/>
<line x1="685.5" y1="144" x2="685.5" y2="665" stroke="#d8d8d8" stroke-width="1"/>
<line x1="704.5" y1="144" x2="704.5" y2="665" stroke="#ececec" stroke-width="1"/>
<line x1="723.5" y1="144" x2="723.5" y2="665" stroke="#d8d8d8" stroke-width="1"/>
<line x1="742.5" y1="144" x2="742.5" y2="665" stroke="#ececec" stroke-width="1"/>
<line x1="761.5" y1="144" x2="761.5" y2="665" stroke="#d8d8d8" stroke-width="1"/>
<line x1="780.5" y1="144" x2="780.5" y2="665" stroke="#ececec" stroke-width="1"/>
<line x1="798.5" y1="144" x2="798.5" y2="665" stroke="#d8d8d8" stroke-width="1"/>
<line x1="817.5" y1="144" x2="817.5" y2="665" stroke="#ececec" stroke-width="1"/>
<line x1="836.5" y1="144" x2="836.5" y2="665" stroke="#d8d8d8" stroke-width="1"/>
<line x1="855.5" y1="144" x2="855.5" y2="665" stroke="#ececec" stroke-width="1"/>
<line x1="874.5" y1="144" x2="874.5" y2="665" stroke="#d8d8d8" stroke-width="1"/>
<line x1="893.5" y1="144" x2="893.5" y2="665" stroke="#ececec" stroke-width="1"/>
<line x1="912.5" y1="144" x2="912.5" y2="665" stroke="#d8d8d8" stroke-width="1"/>
<line x1="931.5" y1="144" x2="931.5" y2="665" stroke="#ececec" stroke-width="1"/>
<line x1="950.5" y1="144" x2="950.5" y2="665" stroke="#d8d8d8" stroke-width="1"/>
<line x1="968.5" y1="144" x2="968.5" y2="665" stroke="#ececec" stroke-width="1"/>
<line x1="987.5" y1="144" x2="987.5" y2="665" stroke="#d8d8d8" stroke-width="1"/>
<line x1="1006.5" y1="144" x2="1006.5" y2="665" stroke="#ececec" stroke-width="1"/>
<line x1="1025.5" y1="144" x2="1025.5" y2="665" stroke="#d8d8d8" stroke-width="1"/>
<line x1="1044.5" y1="144" x2="1044.5" y2="665" stroke="#ececec" stroke-width="1"/>
<line x1="1063.5" y1="144" x2="1063.5" y2="665" stroke="#d8d8d8" stroke-width="1"/>
<line x1="1082.5" y1="144" x2="1082.5" y2="665" stroke="#ececec" stroke-width="1"/>
<line x1="1101.5" y1="144" x2="1101.5" y2="665" stroke="#d8d8d8" stroke-width="1"/>
<line x1="1120.5" y1="144" x2="1120.5" y2="665" stroke="#ececec" stroke-width="1"/>
<line x1="1139.5" y1="144" x2="1139.5" y2="665" stroke="#d8d8d8" stroke-width="1"/>
<line x1="1157.5" y1="144" x2="1157.5" y2="665" stroke="#ececec" stroke-width="1"/>
<line x1="1176.5" y1="144" x2="1176.5" y2="665" stroke="#d8d8d8" stroke-width="1"/>
<line x1="1195.5" y1="144" x2="1195.5" y2="665" stroke="#ececec" stroke-width="1"/>
<line x1="238" y1="144.5" x2="1201.5" y2="144.5" stroke="#d8d8d8" stroke-width="1"/>
<line x1="238" y1="163.5" x2="1201.5" y2="163.5" stroke="#ececec" stroke-width="1"/>
<line x1="238" y1="182.5" x2="1201.5" y2="182.5" stroke="#d8d8d8" stroke-width="1"/>
<line x1="238" y1="201.5" x2="1201.5" y2="201.5" stroke="#ececec" stroke-width="1"/>
<line x1="238" y1="219.5" x2="1201.5" y2="219.5" stroke="#d8d8d8" stroke-width="1"/>
<line x1="238" y1="238.5" x2="1201.5" y2="238.5" stroke="#ececec" stroke-width="1"/>
<line x1="238" y1="257.5" x2="1201.5" y2="257.5" stroke="#d8d8d8" stroke-width="1"/>
<line x1="238" y1="276.5" x2="1201.5" y2="276.5" stroke="#ececec" stroke-width="1"/>
<line x1="238" y1="295.5" x2="1201.5" y2="295.5" stroke="#d8d8d8" stroke-width="1"/>
<line x1="238" y1="314.5" x2="1201.5" y2="314.5" stroke="#ececec" stroke-width="1"/>
<line x1="238" y1="333.5" x2="1201.5" y2="333.5" stroke="#d8d8d8" stroke-width="1"/>
<line x1="238" y1="352.5" x2="1201.5" y2="352.5" stroke="#ececec" stroke-width="1"/>
<line x1="238" y1="371.5" x2="1201.5" y2="371.5" stroke="#d8d8d8" stroke-width="1"/>
<line x1="238" y1="389.5" x2="1201.5" y2="389.5" stroke="#ececec" stroke-width="1"/>
<line x1="238" y1="408.5" x2="1201.5" y2="408.5" stroke="#d8d8d8" stroke-width="1"/>
<line x1="238" y1="427.5" x2="1201.5" y2="427.5" stroke="#ececec" stroke-width="1"/>
<line x1="238" y1="446.5" x2="1201.5" y2="446.5" stroke="#d8d8d8" stroke-width="1"/>
<line x1="238" y1="465.5" x2="1201.5" y2="465.5" stroke="#ececec" stroke-width="1"/>
<line x1="238" y1="484.5" x2="1201.5" y2="484.5" stroke="#d8d8d8" stroke-width="1"/>
<line x1="238" y1="503.5" x2="1201.5" y2="503.5" stroke="#ececec" stroke-width="1"/>
<line x1="238" y1="522.5" x2="1201.5" y2="522.5" stroke="#d8d8d8" stroke-width="1"/>
<line x1="238" y1="541.5" x2="1201.5" y2="541.5" stroke="#ececec" stroke-width="1"/>
<line x1="238" y1="559.5" x2="1201.5" y2="559.5" stroke="#d8d8d8" stroke-width="1"/>
<line x1="238" y1="578.5" x2="1201.5" y2="578.5" stroke="#ececec" stroke-width="1"/>
<line x1="238" y1="597.5" x2="1201.5" y2="597.5" stroke="#d8d8d8" stroke-width="1"/>
<line x1="238" y1="616.5" x2="1201.5" y2="616.5" stroke="#ececec" stroke-width="1"/>
<line x1="238" y1="635.5" x2="1201.5" y2="635.5" stroke="#d8d8d8" stroke-width="1"/>
<line x1="238" y1="654.5" x2="1201.5" y2="654.5" stroke="#ececec" stroke-width="1"/>
<line x1="238" y1="665.5" x2="1201.5" y2="665.5" stroke="#e4e4e4" stroke-width="1"/>
<line x1="1201.5" y1="106" x2="1201.5" y2="665" stroke="#e0e0e0" stroke-width="1"/>
<line x1="1201.5" y1="81" x2="1201.5" y2="97" stroke="#e4e4e8" stroke-width="1"/>
<defs><clipPath id="hr"><rect x="238.6" y="80" width="964" height="17"/></clipPath><clipPath id="vr"><rect x="221" y="97" width="17" height="568"/></clipPath></defs>
<g font-family="Liberation Sans" font-size="9.6" fill="#777" clip-path="url(#hr)">
<line x1="250.5" y1="90" x2="250.5" y2="97" stroke="#dcdcdc" stroke-width="1"/>
<text x="234" y="91">20</text>
<line x1="269.5" y1="81" x2="269.5" y2="97" stroke="#dcdcdc" stroke-width="1"/>
<line x1="288.5" y1="90" x2="288.5" y2="97" stroke="#dcdcdc" stroke-width="1"/>
<text x="271" y="91">30</text>
<line x1="307.5" y1="81" x2="307.5" y2="97" stroke="#dcdcdc" stroke-width="1"/>
<line x1="326.5" y1="90" x2="326.5" y2="97" stroke="#dcdcdc" stroke-width="1"/>
<text x="309" y="91">40</text>
<line x1="345.5" y1="81" x2="345.5" y2="97" stroke="#dcdcdc" stroke-width="1"/>
<line x1="364.5" y1="90" x2="364.5" y2="97" stroke="#dcdcdc" stroke-width="1"/>
<text x="347" y="91">50</text>
<line x1="383.5" y1="81" x2="383.5" y2="97" stroke="#dcdcdc" stroke-width="1"/>
<line x1="402.5" y1="90" x2="402.5" y2="97" stroke="#dcdcdc" stroke-width="1"/>
<text x="385" y="91">60</text>
<line x1="421.5" y1="81" x2="421.5" y2="97" stroke="#dcdcdc" stroke-width="1"/>
<line x1="439.5" y1="90" x2="439.5" y2="97" stroke="#dcdcdc" stroke-width="1"/>
<text x="423" y="91">70</text>
<line x1="458.5" y1="81" x2="458.5" y2="97" stroke="#dcdcdc" stroke-width="1"/>
<line x1="477.5" y1="90" x2="477.5" y2="97" stroke="#dcdcdc" stroke-width="1"/>
<text x="460" y="91">80</text>
<line x1="496.5" y1="81" x2="496.5" y2="97" stroke="#dcdcdc" stroke-width="1"/>
<line x1="515.5" y1="90" x2="515.5" y2="97" stroke="#dcdcdc" stroke-width="1"/>
<text x="498" y="91">90</text>
<line x1="534.5" y1="81" x2="534.5" y2="97" stroke="#dcdcdc" stroke-width="1"/>
<line x1="553.5" y1="90" x2="553.5" y2="97" stroke="#dcdcdc" stroke-width="1"/>
<text x="536" y="91">100</text>
<line x1="572.5" y1="81" x2="572.5" y2="97" stroke="#dcdcdc" stroke-width="1"/>
<line x1="591.5" y1="90" x2="591.5" y2="97" stroke="#dcdcdc" stroke-width="1"/>
<text x="574" y="91">110</text>
<line x1="609.5" y1="81" x2="609.5" y2="97" stroke="#dcdcdc" stroke-width="1"/>
<line x1="628.5" y1="90" x2="628.5" y2="97" stroke="#dcdcdc" stroke-width="1"/>
<text x="611" y="91">120</text>
<line x1="647.5" y1="81" x2="647.5" y2="97" stroke="#dcdcdc" stroke-width="1"/>
<line x1="666.5" y1="90" x2="666.5" y2="97" stroke="#dcdcdc" stroke-width="1"/>
<text x="649" y="91">130</text>
<line x1="685.5" y1="81" x2="685.5" y2="97" stroke="#dcdcdc" stroke-width="1"/>
<line x1="704.5" y1="90" x2="704.5" y2="97" stroke="#dcdcdc" stroke-width="1"/>
<text x="687" y="91">140</text>
<line x1="723.5" y1="81" x2="723.5" y2="97" stroke="#dcdcdc" stroke-width="1"/>
<line x1="742.5" y1="90" x2="742.5" y2="97" stroke="#dcdcdc" stroke-width="1"/>
<text x="725" y="91">150</text>
<line x1="761.5" y1="81" x2="761.5" y2="97" stroke="#dcdcdc" stroke-width="1"/>
<line x1="780.5" y1="90" x2="780.5" y2="97" stroke="#dcdcdc" stroke-width="1"/>
<text x="763" y="91">160</text>
<line x1="798.5" y1="81" x2="798.5" y2="97" stroke="#dcdcdc" stroke-width="1"/>
<line x1="817.5" y1="90" x2="817.5" y2="97" stroke="#dcdcdc" stroke-width="1"/>
<text x="800" y="91">170</text>
<line x1="836.5" y1="81" x2="836.5" y2="97" stroke="#dcdcdc" stroke-width="1"/>
<line x1="855.5" y1="90" x2="855.5" y2="97" stroke="#dcdcdc" stroke-width="1"/>
<text x="838" y="91">180</text>
<line x1="874.5" y1="81" x2="874.5" y2="97" stroke="#dcdcdc" stroke-width="1"/>
<line x1="893.5" y1="90" x2="893.5" y2="97" stroke="#dcdcdc" stroke-width="1"/>
<text x="876" y="91">190</text>
<line x1="912.5" y1="81" x2="912.5" y2="97" stroke="#dcdcdc" stroke-width="1"/>
<line x1="931.5" y1="90" x2="931.5" y2="97" stroke="#dcdcdc" stroke-width="1"/>
<text x="914" y="91">200</text>
<line x1="950.5" y1="81" x2="950.5" y2="97" stroke="#dcdcdc" stroke-width="1"/>
<line x1="968.5" y1="90" x2="968.5" y2="97" stroke="#dcdcdc" stroke-width="1"/>
<text x="952" y="91">210</text>
<line x1="987.5" y1="81" x2="987.5" y2="97" stroke="#dcdcdc" stroke-width="1"/>
<line x1="1006.5" y1="90" x2="1006.5" y2="97" stroke="#dcdcdc" stroke-width="1"/>
<text x="989" y="91">220</text>
<line x1="1025.5" y1="81" x2="1025.5" y2="97" stroke="#dcdcdc" stroke-width="1"/>
<line x1="1044.5" y1="90" x2="1044.5" y2="97" stroke="#dcdcdc" stroke-width="1"/>
<text x="1027" y="91">230</text>
<line x1="1063.5" y1="81" x2="1063.5" y2="97" stroke="#dcdcdc" stroke-width="1"/>
<line x1="1082.5" y1="90" x2="1082.5" y2="97" stroke="#dcdcdc" stroke-width="1"/>
<text x="1065" y="91">240</text>
<line x1="1101.5" y1="81" x2="1101.5" y2="97" stroke="#dcdcdc" stroke-width="1"/>
<line x1="1120.5" y1="90" x2="1120.5" y2="97" stroke="#dcdcdc" stroke-width="1"/>
<text x="1103" y="91">250</text>
<line x1="1139.5" y1="81" x2="1139.5" y2="97" stroke="#dcdcdc" stroke-width="1"/>
<line x1="1157.5" y1="90" x2="1157.5" y2="97" stroke="#dcdcdc" stroke-width="1"/>
<text x="1141" y="91">260</text>
<line x1="1176.5" y1="81" x2="1176.5" y2="97" stroke="#dcdcdc" stroke-width="1"/>
<line x1="1195.5" y1="90" x2="1195.5" y2="97" stroke="#dcdcdc" stroke-width="1"/>
<text x="1178" y="91">270</text>
</g>
<g font-family="Liberation Sans" font-size="9.8" fill="#666" clip-path="url(#vr)">
<line x1="221" y1="106.5" x2="238" y2="106.5" stroke="#d6d6d6" stroke-width="1"/>
<line x1="231" y1="125.5" x2="238" y2="125.5" stroke="#d6d6d6" stroke-width="1"/>
<text transform="translate(231,107.5) rotate(-90)" text-anchor="end">0</text>
<line x1="221" y1="144.5" x2="238" y2="144.5" stroke="#d6d6d6" stroke-width="1"/>
<line x1="231" y1="163.5" x2="238" y2="163.5" stroke="#d6d6d6" stroke-width="1"/>
<text transform="translate(231,145.5) rotate(-90)" text-anchor="end">10</text>
<line x1="221" y1="182.5" x2="238" y2="182.5" stroke="#d6d6d6" stroke-width="1"/>
<line x1="231" y1="201.5" x2="238" y2="201.5" stroke="#d6d6d6" stroke-width="1"/>
<text transform="translate(231,183.5) rotate(-90)" text-anchor="end">20</text>
<line x1="221" y1="219.5" x2="238" y2="219.5" stroke="#d6d6d6" stroke-width="1"/>
<line x1="231" y1="238.5" x2="238" y2="238.5" stroke="#d6d6d6" stroke-width="1"/>
<text transform="translate(231,220.5) rotate(-90)" text-anchor="end">30</text>
<line x1="221" y1="257.5" x2="238" y2="257.5" stroke="#d6d6d6" stroke-width="1"/>
<line x1="231" y1="276.5" x2="238" y2="276.5" stroke="#d6d6d6" stroke-width="1"/>
<text transform="translate(231,258.5) rotate(-90)" text-anchor="end">40</text>
<line x1="221" y1="295.5" x2="238" y2="295.5" stroke="#d6d6d6" stroke-width="1"/>
<line x1="231" y1="314.5" x2="238" y2="314.5" stroke="#d6d6d6" stroke-width="1"/>
<text transform="translate(231,296.5) rotate(-90)" text-anchor="end">50</text>
<line x1="221" y1="333.5" x2="238" y2="333.5" stroke="#d6d6d6" stroke-width="1"/>
<line x1="231" y1="352.5" x2="238" y2="352.5" stroke="#d6d6d6" stroke-width="1"/>
<text transform="translate(231,334.5) rotate(-90)" text-anchor="end">60</text>
<line x1="221" y1="371.5" x2="238" y2="371.5" stroke="#d6d6d6" stroke-width="1"/>
<line x1="231" y1="389.5" x2="238" y2="389.5" stroke="#d6d6d6" stroke-width="1"/>
<text transform="translate(231,372.5) rotate(-90)" text-anchor="end">70</text>
<line x1="221" y1="408.5" x2="238" y2="408.5" stroke="#d6d6d6" stroke-width="1"/>
<line x1="231" y1="427.5" x2="238" y2="427.5" stroke="#d6d6d6" stroke-width="1"/>
<text transform="translate(231,409.5) rotate(-90)" text-anchor="end">80</text>
<line x1="221" y1="446.5" x2="238" y2="446.5" stroke="#d6d6d6" stroke-width="1"/>
<line x1="231" y1="465.5" x2="238" y2="465.5" stroke="#d6d6d6" stroke-width="1"/>
<text transform="translate(231,447.5) rotate(-90)" text-anchor="end">90</text>
<line x1="221" y1="484.5" x2="238" y2="484.5" stroke="#d6d6d6" stroke-width="1"/>
<line x1="231" y1="503.5" x2="238" y2="503.5" stroke="#d6d6d6" stroke-width="1"/>
<text transform="translate(231,485.5) rotate(-90)" text-anchor="end">100</text>
<line x1="221" y1="522.5" x2="238" y2="522.5" stroke="#d6d6d6" stroke-width="1"/>
<line x1="231" y1="541.5" x2="238" y2="541.5" stroke="#d6d6d6" stroke-width="1"/>
<text transform="translate(231,523.5) rotate(-90)" text-anchor="end">110</text>
<line x1="221" y1="559.5" x2="238" y2="559.5" stroke="#d6d6d6" stroke-width="1"/>
<line x1="231" y1="578.5" x2="238" y2="578.5" stroke="#d6d6d6" stroke-width="1"/>
<text transform="translate(231,560.5) rotate(-90)" text-anchor="end">120</text>
<line x1="221" y1="597.5" x2="238" y2="597.5" stroke="#d6d6d6" stroke-width="1"/>
<line x1="231" y1="616.5" x2="238" y2="616.5" stroke="#d6d6d6" stroke-width="1"/>
<text transform="translate(231,598.5) rotate(-90)" text-anchor="end">130</text>
<line x1="221" y1="635.5" x2="238" y2="635.5" stroke="#d6d6d6" stroke-width="1"/>
<line x1="231" y1="654.5" x2="238" y2="654.5" stroke="#d6d6d6" stroke-width="1"/>
<text transform="translate(231,636.5) rotate(-90)" text-anchor="end">140</text>
<line x1="221" y1="673.5" x2="238" y2="673.5" stroke="#d6d6d6" stroke-width="1"/>
<line x1="231" y1="692.5" x2="238" y2="692.5" stroke="#d6d6d6" stroke-width="1"/>
<text transform="translate(231,674.5) rotate(-90)" text-anchor="end">150</text>
</g>
<rect x="1203.5" y="166.5" width="8.5" height="284.5" rx="4.2" fill="#dcdce3"/>
<rect x="404" y="668" width="604" height="8" rx="4" fill="#dfdfe6"/>
<rect x="1202" y="665" width="13" height="13" fill="#ebebf0"/>
<line x1="221" y1="678.5" x2="1215" y2="678.5" stroke="#f0f0f2" stroke-width="1"/>
<rect x="256.00" y="680" width="9" height="14" rx="2.2" fill="#A71D2A"/>
<rect x="266.53" y="680" width="9" height="14" rx="2.2" fill="#C8102E"/>
<rect x="277.06" y="680" width="9" height="14" rx="2.2" fill="#D9415A"/>
<rect x="287.59" y="680" width="9" height="14" rx="2.2" fill="#E8657C"/>
<rect x="298.12" y="680" width="9" height="14" rx="2.2" fill="#F29BAD"/>
<rect x="308.65" y="680" width="9" height="14" rx="2.2" fill="#1F7A80"/>
<rect x="319.18" y="680" width="9" height="14" rx="2.2" fill="#2E96B8"/>
<rect x="329.71" y="680" width="9" height="14" rx="2.2" fill="#3AA9D0"/>
<rect x="340.24" y="680" width="9" height="14" rx="2.2" fill="#5DCCEA"/>
<rect x="350.77" y="680" width="9" height="14" rx="2.2" fill="#A5E3F5"/>
<rect x="361.30" y="680" width="9" height="14" rx="2.2" fill="#F04E23"/>
<rect x="371.83" y="680" width="9" height="14" rx="2.2" fill="#F6772F"/>
<rect x="382.36" y="680" width="9" height="14" rx="2.2" fill="#F99A1C"/>
<rect x="392.89" y="680" width="9" height="14" rx="2.2" fill="#FBB91E"/>
<rect x="403.42" y="680" width="9" height="14" rx="2.2" fill="#F9C86A"/>
<rect x="413.95" y="680" width="9" height="14" rx="2.2" fill="#1A8478"/>
<rect x="424.48" y="680" width="9" height="14" rx="2.2" fill="#1FA88D"/>
<rect x="435.01" y="680" width="9" height="14" rx="2.2" fill="#27C0A0"/>
<rect x="445.54" y="680" width="9" height="14" rx="2.2" fill="#6BD6BE"/>
<rect x="456.07" y="680" width="9" height="14" rx="2.2" fill="#9FE6D8"/>
<rect x="466.60" y="680" width="9" height="14" rx="2.2" fill="#8E2E63"/>
<rect x="477.13" y="680" width="9" height="14" rx="2.2" fill="#C2448A"/>
<rect x="487.66" y="680" width="9" height="14" rx="2.2" fill="#E06BA8"/>
<rect x="498.19" y="680" width="9" height="14" rx="2.2" fill="#F48CC4"/>
<rect x="508.72" y="680" width="9" height="14" rx="2.2" fill="#F3C5DE"/>
<rect x="519.25" y="680" width="9" height="14" rx="2.2" fill="#5E8B1E"/>
<rect x="529.78" y="680" width="9" height="14" rx="2.2" fill="#78A82E"/>
<rect x="540.31" y="680" width="9" height="14" rx="2.2" fill="#97C43A"/>
<rect x="550.84" y="680" width="9" height="14" rx="2.2" fill="#B7D660"/>
<rect x="561.37" y="680" width="9" height="14" rx="2.2" fill="#D6E89A"/>
<rect x="571.90" y="680" width="9" height="14" rx="2.2" fill="#1E2EA8"/>
<rect x="582.43" y="680" width="9" height="14" rx="2.2" fill="#3150D6"/>
<rect x="592.96" y="680" width="9" height="14" rx="2.2" fill="#5B45E6"/>
<rect x="603.49" y="680" width="9" height="14" rx="2.2" fill="#8878F2"/>
<rect x="614.02" y="680" width="9" height="14" rx="2.2" fill="#A898F6"/>
<rect x="624.55" y="680" width="9" height="14" rx="2.2" fill="#FDBE00"/>
<rect x="635.08" y="680" width="9" height="14" rx="2.2" fill="#FCCF2C"/>
<rect x="645.61" y="680" width="9" height="14" rx="2.2" fill="#EEE631"/>
<rect x="656.14" y="680" width="9" height="14" rx="2.2" fill="#F8F057"/>
<rect x="666.67" y="680" width="9" height="14" rx="2.2" fill="#FAFB9A"/>
<rect x="677.20" y="680" width="9" height="14" rx="2.2" fill="#8E4BD6"/>
<rect x="687.73" y="680" width="9" height="14" rx="2.2" fill="#B34EE0"/>
<rect x="698.26" y="680" width="9" height="14" rx="2.2" fill="#CC72EC"/>
<rect x="708.79" y="680" width="9" height="14" rx="2.2" fill="#C08CF0"/>
<rect x="719.32" y="680" width="9" height="14" rx="2.2" fill="#E0AAF5"/>
<rect x="729.85" y="680" width="9" height="14" rx="2.2" fill="#1E7A3C"/>
<rect x="740.38" y="680" width="9" height="14" rx="2.2" fill="#2E9A4E"/>
<rect x="750.91" y="680" width="9" height="14" rx="2.2" fill="#4BAA6A"/>
<rect x="761.44" y="680" width="9" height="14" rx="2.2" fill="#5CB77C"/>
<rect x="771.97" y="680" width="9" height="14" rx="2.2" fill="#95D6A8"/>
<rect x="782.50" y="680" width="9" height="14" rx="2.2" fill="#D9302A"/>
<rect x="793.03" y="680" width="9" height="14" rx="2.2" fill="#F0483E"/>
<rect x="803.56" y="680" width="9" height="14" rx="2.2" fill="#F06A66"/>
<rect x="814.09" y="680" width="9" height="14" rx="2.2" fill="#F08480"/>
<rect x="824.62" y="680" width="9" height="14" rx="2.2" fill="#F5A09A"/>
<rect x="835.15" y="680" width="9" height="14" rx="2.2" fill="#1F3F9A"/>
<rect x="845.68" y="680" width="9" height="14" rx="2.2" fill="#2E55C8"/>
<rect x="856.21" y="680" width="9" height="14" rx="2.2" fill="#3C6FDC"/>
<rect x="866.74" y="680" width="9" height="14" rx="2.2" fill="#6B95EE"/>
<rect x="877.27" y="680" width="9" height="14" rx="2.2" fill="#9CBEF5"/>
<rect x="887.80" y="680" width="9" height="14" rx="2.2" fill="#7A2E0C"/>
<rect x="898.33" y="680" width="9" height="14" rx="2.2" fill="#9C4418"/>
<rect x="908.86" y="680" width="9" height="14" rx="2.2" fill="#A65020"/>
<rect x="919.39" y="680" width="9" height="14" rx="2.2" fill="#D0643E"/>
<rect x="929.92" y="680" width="9" height="14" rx="2.2" fill="#E08060"/>
<rect x="940.45" y="680" width="9" height="14" rx="2.2" fill="#1F86CC"/>
<rect x="950.98" y="680" width="9" height="14" rx="2.2" fill="#3396E8"/>
<rect x="961.51" y="680" width="9" height="14" rx="2.2" fill="#4BAAF0"/>
<rect x="972.04" y="680" width="9" height="14" rx="2.2" fill="#4AC4F0"/>
<rect x="982.57" y="680" width="9" height="14" rx="2.2" fill="#70D4F5"/>
<rect x="993.10" y="680" width="9" height="14" rx="2.2" fill="#7A4A2A"/>
<rect x="1003.63" y="680" width="9" height="14" rx="2.2" fill="#9A5A3A"/>
<rect x="1014.16" y="680" width="9" height="14" rx="2.2" fill="#B06A45"/>
<rect x="1024.69" y="680" width="9" height="14" rx="2.2" fill="#D08050"/>
<rect x="1035.22" y="680" width="9" height="14" rx="2.2" fill="#F59A66"/>
<rect x="1045.75" y="680" width="9" height="14" rx="2.2" fill="#8A7E78"/>
<rect x="1056.28" y="680" width="9" height="14" rx="2.2" fill="#ABA898"/>
<rect x="1066.81" y="680" width="9" height="14" rx="2.2" fill="#C9C8B8"/>
<rect x="1077.34" y="680" width="9" height="14" rx="2.2" fill="#DDDDD0"/>
<rect x="1087.87" y="680" width="9" height="14" rx="2.2" fill="#F0EEDC"/>
<rect x="1098.40" y="680" width="9" height="14" rx="2.2" fill="#1E1E1E"/>
<rect x="1108.93" y="680" width="9" height="14" rx="2.2" fill="#333333"/>
<rect x="1119.46" y="680" width="9" height="14" rx="2.2" fill="#4A4A4A"/>
<rect x="1129.99" y="680" width="9" height="14" rx="2.2" fill="#666666"/>
<rect x="1140.52" y="680" width="9" height="14" rx="2.2" fill="#808080"/>
<rect x="1151.05" y="680" width="9" height="14" rx="2.2" fill="#AFAFAF"/>
<rect x="1161.58" y="680" width="9" height="14" rx="2.2" fill="#C4C4C4"/>
<rect x="1172.11" y="680" width="9" height="14" rx="2.2" fill="#D6D6D6"/>
<rect x="1182.64" y="680" width="9" height="14" rx="2.2" fill="#E4E4E4"/>
<rect x="1193.17" y="680" width="9" height="14" rx="2.2" fill="#F2F2F2"/>
<g transform="translate(232,681)"><path d="M6 1L1 6l4.5 4.5L10.5 5.5z" fill="none" stroke="#333" stroke-width="1.4"/><path d="M1.5 6.5h8.5l-4.5 4z" fill="#333"/><circle cx="11.5" cy="10" r="1.3" fill="#555"/><path d="M14 5h5l-2.5 3z" fill="#777"/></g>
</svg>
<svg style="left:0;top:0" width="1249" height="730">
<path d="M596.13 319.12A160.3 160.3 0 0 1 817.90 323.85L828.79 312.96L803.33 378.32L742.73 399.02L753.48 388.27A69.2 69.2 0 0 0 661.03 383.40L645.67 338.42Z" fill="#fdca50"/>
<path d="M822.63 328.78A160.3 160.3 0 0 1 817.90 550.55L828.79 561.44L763.43 535.98L742.73 475.38L753.48 486.13A69.2 69.2 0 0 0 758.35 393.68L803.33 378.32Z" fill="#8ec0fd"/>
<path d="M812.97 555.28A160.3 160.3 0 0 1 591.20 550.55L580.31 561.44L605.77 496.08L666.37 475.38L655.62 486.13A69.2 69.2 0 0 0 748.07 491.00L763.43 535.98Z" fill="#4056c6"/>
<path d="M586.47 545.62A160.3 160.3 0 0 1 591.20 323.85L580.31 312.96L645.67 338.42L666.37 399.02L655.62 388.27A69.2 69.2 0 0 0 650.75 480.72L605.77 496.08Z" fill="#fe7c77"/>
<defs><path id="c1" d="M596.05 437.20A108.5 108.5 0 1 1 813.05 437.20A108.5 108.5 0 1 1 596.05 437.20"/><path id="c2" d="M597.05 437.20A107.5 107.5 0 1 1 812.05 437.20A107.5 107.5 0 1 1 597.05 437.20"/></defs>
<text font-family="Liberation Sans" font-size="20" fill="#fff" text-anchor="middle"><textPath href="#c1" startOffset="199.78">www.x6d.com</textPath></text>
<text font-family="Liberation Sans" font-size="20" fill="#fff" text-anchor="middle"><textPath href="#c1" startOffset="540.65">www.x6g.com</textPath></text>
<text font-family="Liberation Sans" font-size="20" font-weight="300" fill="#fff" text-anchor="middle"><textPath href="#c2" startOffset="28.14">螺蛳粉</textPath></text>
<text font-family="Liberation Sans" font-size="20" font-weight="300" fill="#fff" text-anchor="middle"><textPath href="#c2" startOffset="365.86">螺蛳面</textPath></text>
<defs><linearGradient id="xb" x1="0" y1="0" x2="0" y2="1"><stop offset="0" stop-color="#2f9ae6"/><stop offset="1" stop-color="#1f78c8"/></linearGradient></defs>
<path d="M524 364C553 347 574 336 590 336C599 336 600 344 597 350C592 360 582 367 573.5 371C583 361 591 352 588 347.5C584 343 562 347 524 364Z" fill="#2aa33a"/>
<path d="M531.5 365.5L538.5 361L557.5 391.5H549Z" fill="url(#xb)"/><path d="M551.5 354.5L557.5 357L541 385Q537.5 391 531 390L527 387.5L531.5 383Z" fill="url(#xb)"/>
<path d="M562.3 352.3h8.5v39.2h-8.5z" fill="url(#xb)"/><path d="M573.5 372.8Q585 378 586.5 391.5H577.5Q577 381 573.5 372.8z" fill="url(#xb)"/>
<text x="593.5" y="378.6" font-family="Liberation Sans" font-size="23" letter-spacing="3" font-weight="900" fill="#7a7a7a" stroke="#7a7a7a" stroke-width="1.4" stroke-linejoin="round">先客吧论坛</text>
</svg>
<svg style="left:1226px;top:65px" width="14" height="13"><path d="M7 1L2 6.5 7 12M12.5 1l-5 5.5 5 5.5" fill="none" stroke="#666" stroke-width="1.2"/></svg>
<svg style="left:1222px;top:92px" width="22" height="22"><path d="M9 2.6l3 3.3" stroke="#2a2a2a" stroke-width="1.8"/><path d="M3.6 13L9.6 6.2l8.6 6.4-7.8 7.6z" fill="none" stroke="#2a2a2a" stroke-width="2" stroke-linejoin="round"/><path d="M4.3 14.2h13.4l-7.3 6z" fill="#2a2a2a"/><circle cx="18.6" cy="18.4" r="1.6" fill="#2a2a2a"/></svg>
<div class="a" style="left:1216px;top:132px;width:33px;height:35px;background:#1a7cf0"></div>
<svg style="left:1224px;top:138px" width="19" height="19"><path d="M3.3 6.6A7.6 7.6 0 1 1 2.2 10.6" fill="none" stroke="#fff" stroke-width="2.1"/><path d="M1.4 4.2l0.6 4.6 4.4-1" fill="none" stroke="#fff" stroke-width="2" stroke-linejoin="round"/><path d="M9.2 6v4.3l2.8 2" fill="none" stroke="#fff" stroke-width="1.9"/></svg>
<svg style="left:16px;top:705px" width="24" height="14"><path d="M1.5 1v12M22.5 1v12" stroke="#555" stroke-width="1.6"/><rect x="5" y="1.5" width="14" height="11" rx="1" fill="none" stroke="#333" stroke-width="1.5"/></svg>
<div class="t" style="left:57px;top:705px;color:#222">页-1</div>
<svg style="left:153px;top:710px" width="6" height="4"><path d="M0 0h5l-2.5 3z" fill="#999"/></svg>
<svg style="left:187px;top:706px" width="12" height="12"><path d="M6 0.5v11M0.5 6h11" stroke="#222" stroke-width="1.6"/></svg>
<div class="t" style="left:246px;top:706px;color:#2a78d6;font-weight:bold">页-1</div>
<svg style="left:846px;top:704px" width="20" height="19"><path d="M10 1.5L2 6l8 4.5L18 6z" fill="none" stroke="#333" stroke-width="1.5" stroke-linejoin="round"/><path d="M2 10.5l8 4.5 8-4.5" fill="none" stroke="#333" stroke-width="1.5" stroke-linejoin="round"/></svg>
<svg style="left:884px;top:704px" width="18" height="17"><path d="M1 5V1h4M13 1h4v4M17 12v4h-4M5 16H1v-4" fill="none" stroke="#333" stroke-width="1.5"/><path d="M6.5 5h3.6l1.4 1.5V12H6.5z" fill="#6a6a6a"/></svg>
<div class="t" style="left:909px;top:707px;color:#222">专注</div>
<svg style="left:948px;top:703px" width="19" height="19"><circle cx="9.5" cy="9.5" r="8" fill="none" stroke="#333" stroke-width="1.5"/><path d="M7.3 5.5v8l6-4z" fill="#6a6a6a"/></svg>
<div class="t" style="left:980px;top:707px;color:#222;font-size:12.5px">100%</div>
<svg style="left:1018px;top:711px" width="6" height="4"><path d="M0 0h5l-2.5 3z" fill="#999"/></svg>
<svg style="left:1036px;top:712px" width="10" height="2"><rect width="9" height="1.6" fill="#333"/></svg>
<div class="a" style="left:1053px;top:712px;width:25px;height:2px;background:#333"></div>
<div class="a" style="left:1078px;top:712px;width:71px;height:2px;background:#fff"></div>
<div class="a" style="left:1072px;top:707px;width:12px;height:12px;border-radius:50%;background:#fff;border:2px solid #333"></div>
<svg style="left:1155px;top:707px" width="12" height="12"><path d="M6 0.5v11M0.5 6h11" stroke="#333" stroke-width="1.6"/></svg>
<svg style="left:1181px;top:705px" width="17" height="16"><path d="M1 5V1h4M12 1h4v4M16 11v4h-4M5 15H1v-4" fill="none" stroke="#333" stroke-width="1.5"/></svg>
<svg style="left:1212px;top:704px" width="18" height="17"><rect x="1" y="1" width="15.5" height="15" fill="none" stroke="#333" stroke-width="1.5"/><path d="M4.5 8.5h8.5M6.5 6.5l-2 2 2 2M11 6.5l2 2-2 2" fill="none" stroke="#333" stroke-width="1.3"/></svg>
</body></html>
